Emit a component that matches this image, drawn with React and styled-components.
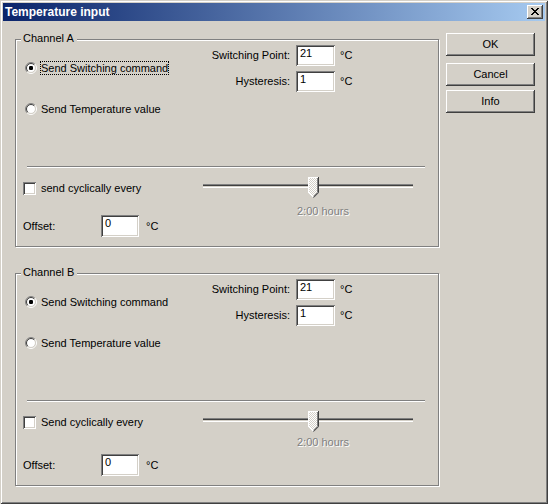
import React from 'react';
import styled, { createGlobalStyle } from 'styled-components';

const GlobalStyle = createGlobalStyle`
  html, body { margin: 0; padding: 0; background: #D4D0C8; }
  body {
    font-family: "Liberation Sans", Arial, sans-serif;
    font-size: 11px;
    color: #000;
  }
`;

const Window = styled.div`
  width: 548px;
  height: 504px;
  box-sizing: border-box;
  padding: 3px;
  background: #D4D0C8;
  box-shadow: inset 1px 1px 0 #D4D0C8, inset -1px -1px 0 #404040,
    inset 2px 2px 0 #fff, inset -2px -2px 0 #808080;
  display: flex;
  flex-direction: column;
`;

const Caption = styled.div`
  height: 18px;
  flex: none;
  display: flex;
  align-items: center;
  justify-content: space-between;
  padding: 0 2px 0 2px;
  background: linear-gradient(to right, #0A246A, #A6CAF0);
`;

const CaptionTitle = styled.span`
  color: #fff;
  font-weight: bold;
  font-size: 12px;
  line-height: 14px;
`;

const CloseButton = styled.div`
  width: 16px;
  height: 14px;
  box-sizing: border-box;
  padding: 3px 0 0 4px;
  background: #D4D0C8;
  box-shadow: inset -1px -1px 0 #404040, inset 1px 1px 0 #fff,
    inset -2px -2px 0 #808080, inset 2px 2px 0 #D4D0C8;
  display: flex;
  align-items: flex-start;
`;

const Body = styled.div`
  display: flex;
  flex: 1;
`;

const GroupsColumn = styled.div`
  display: flex;
  flex-direction: column;
  gap: 26px;
  padding: 18px 0 0 12px;
`;

const ButtonsColumn = styled.div`
  display: flex;
  flex-direction: column;
  padding-top: 12px;
  margin-left: 7px;
`;

const PushButton = styled.div`
  width: 89px;
  height: 23px;
  box-sizing: border-box;
  margin-top: ${(p) => p.$gap || 0}px;
  display: flex;
  align-items: center;
  justify-content: center;
  background: #D4D0C8;
  box-shadow: inset -1px -1px 0 #404040, inset 1px 1px 0 #fff,
    inset -2px -2px 0 #808080, inset 2px 2px 0 #D4D0C8;
  line-height: 13px;
`;

const Group = styled.div`
  position: relative;
  box-sizing: border-box;
  width: 424px;
  height: ${(p) => p.$height}px;
  border: 1px solid #808080;
  box-shadow: 1px 1px 0 #fff, inset 1px 1px 0 #fff;
`;

const Legend = styled.span`
  position: absolute;
  left: 5px;
  top: -8px;
  padding: 0 3px 0 2px;
  line-height: 13px;
  background: #D4D0C8;
`;

const TopSection = styled.div`
  display: grid;
  grid-template-columns: 184px auto;
  align-items: start;
`;

const RadioList = styled.div`
  display: flex;
  flex-direction: column;
  gap: 27px;
  padding-top: 21px;
`;

const RadioRow = styled.div`
  display: flex;
  align-items: center;
  height: 14px;
  padding-left: 9px;
`;

const RadioText = styled.span`
  margin-left: 3px;
  line-height: 12px;
  border: 1px dotted ${(p) => (p.$focused ? '#000' : 'transparent')};
  white-space: nowrap;
`;

const RadioSvg = styled.svg`
  flex: none;
  display: block;
`;

const FieldGrid = styled.div`
  display: grid;
  grid-template-columns: 90px auto auto;
  justify-content: start;
  align-items: center;
  row-gap: 5px;
  padding-top: 5px;
`;

const FieldLabel = styled.span`
  text-align: right;
  line-height: 13px;
  white-space: nowrap;
`;

const EditBox = styled.div`
  box-sizing: border-box;
  width: ${(p) => p.$w}px;
  height: ${(p) => p.$h}px;
  margin-left: ${(p) => p.$ml || 0}px;
  padding: 2px 2px 0 4px;
  line-height: 13px;
  background: #fff;
  box-shadow: inset 1px 1px 0 #808080, inset -1px -1px 0 #fff,
    inset 2px 2px 0 #404040, inset -2px -2px 0 #D4D0C8;
`;

const Unit = styled.span`
  margin-left: ${(p) => p.$ml}px;
  line-height: 13px;
`;

const Separator = styled.div`
  margin: 50px 0 0 11px;
  width: 398px;
  height: 0;
  border-top: 1px solid #808080;
  border-bottom: 1px solid #fff;
`;

const BottomSection = styled.div`
  display: grid;
  grid-template-columns: 187px 210px;
  margin-top: 9px;
`;

const LeftControls = styled.div`
  display: flex;
  flex-direction: column;
  padding-left: 7px;
`;

const CheckRow = styled.div`
  display: flex;
  align-items: center;
  gap: 5px;
  height: 13px;
  margin-top: 5px;
  line-height: 13px;
  white-space: nowrap;
`;

const CheckBox = styled.span`
  flex: none;
  width: 13px;
  height: 13px;
  background: #fff;
  box-shadow: inset 1px 1px 0 #808080, inset -1px -1px 0 #fff,
    inset 2px 2px 0 #404040, inset -2px -2px 0 #D4D0C8;
`;

const OffsetRow = styled.div`
  display: flex;
  align-items: center;
  margin-top: ${(p) => p.$gap}px;
`;

const OffsetLabel = styled.span`
  width: 78px;
  line-height: 13px;
`;

const SliderBox = styled.div`
  display: flex;
  flex-direction: column;
`;

const SliderTrackArea = styled.div`
  position: relative;
  height: 21px;
`;

const Track = styled.div`
  margin-top: 7px;
  height: 4px;
  box-sizing: border-box;
  border-top: 1px solid #808080;
  border-bottom: 1px solid #fff;
  background: linear-gradient(#404040 0 1px, #D4D0C8 1px 2px);
`;

const Thumb = styled.svg`
  position: absolute;
  left: 105px;
  top: 0;
  display: block;
`;

const SliderCaption = styled.div`
  margin-top: ${(p) => p.$gap}px;
  padding-left: 94px;
  line-height: 13px;
  color: #808080;
  text-shadow: 1px 1px 0 #fff;
`;

const RadioIcon = ({ checked }) => (
  <RadioSvg width="12" height="12" viewBox="0 0 12 12">
    <circle cx="6" cy="6" r="4.2" fill="#fff" />
    <path d="M2.111 9.889A5.5 5.5 0 0 1 9.889 2.111" fill="none" stroke="#808080" />
    <path d="M9.889 2.111A5.5 5.5 0 0 1 2.111 9.889" fill="none" stroke="#fff" />
    <path d="M2.818 9.182A4.5 4.5 0 0 1 9.182 2.818" fill="none" stroke="#404040" />
    <path d="M9.182 2.818A4.5 4.5 0 0 1 2.818 9.182" fill="none" stroke="#D4D0C8" />
    {checked && <rect x="4" y="4" width="4" height="4" rx="1.2" fill="#000" />}
  </RadioSvg>
);

const CloseGlyph = () => (
  <svg width="8" height="7" viewBox="0 0 8 7" shapeRendering="crispEdges">
    <g fill="#000">
      <rect x="0" y="0" width="2" height="1" />
      <rect x="6" y="0" width="2" height="1" />
      <rect x="1" y="1" width="2" height="1" />
      <rect x="5" y="1" width="2" height="1" />
      <rect x="2" y="2" width="4" height="1" />
      <rect x="3" y="3" width="2" height="1" />
      <rect x="2" y="4" width="4" height="1" />
      <rect x="1" y="5" width="2" height="1" />
      <rect x="5" y="5" width="2" height="1" />
      <rect x="0" y="6" width="2" height="1" />
      <rect x="6" y="6" width="2" height="1" />
    </g>
  </svg>
);

const ThumbIcon = ({ id }) => (
  <Thumb width="11" height="21" viewBox="0 0 11 21">
    <defs>
      <pattern id={id} width="2" height="2" patternUnits="userSpaceOnUse">
        <rect width="2" height="2" fill="#D4D0C8" />
        <rect width="1" height="1" fill="#fff" />
        <rect x="1" y="1" width="1" height="1" fill="#fff" />
      </pattern>
    </defs>
    <path d="M0 0H11V15.5L5.5 21 0 15.5Z" fill={`url(#${id})`} />
    <path d="M0.5 15.5V0.5H10" fill="none" stroke="#fff" shapeRendering="crispEdges" />
    <path d="M0.5 15.5L5.5 20.5" fill="none" stroke="#fff" />
    <path d="M9.5 1V15.5L5.5 19.5" fill="none" stroke="#808080" />
    <path d="M10.5 0V15.7L5.5 20.7" fill="none" stroke="#404040" />
  </Thumb>
);

const channels = [
  { name: 'Channel A', height: 208, cyclic: 'send cyclically every', focused: true, offsetGap: 20, captionGap: 7 },
  { name: 'Channel B', height: 213, cyclic: 'Send cyclically every', focused: false, offsetGap: 25, captionGap: 4 },
];

const ChannelGroup = ({ ch, idx }) => (
  <Group $height={ch.height}>
    <Legend>{ch.name}</Legend>
    <TopSection>
      <RadioList>
        <RadioRow>
          <RadioIcon checked />
          <RadioText $focused={ch.focused}>Send Switching command</RadioText>
        </RadioRow>
        <RadioRow>
          <RadioIcon />
          <RadioText>Send Temperature value</RadioText>
        </RadioRow>
      </RadioList>
      <FieldGrid>
        <FieldLabel>Switching Point:</FieldLabel>
        <EditBox $w={39} $h={21} $ml={6}>21</EditBox>
        <Unit $ml={5}>°C</Unit>
        <FieldLabel>Hysteresis:</FieldLabel>
        <EditBox $w={39} $h={21} $ml={6}>1</EditBox>
        <Unit $ml={5}>°C</Unit>
      </FieldGrid>
    </TopSection>
    <Separator />
    <BottomSection>
      <LeftControls>
        <CheckRow>
          <CheckBox />
          <span>{ch.cyclic}</span>
        </CheckRow>
        <OffsetRow $gap={ch.offsetGap}>
          <OffsetLabel>Offset:</OffsetLabel>
          <EditBox $w={38} $h={22}>0</EditBox>
          <Unit $ml={7}>°C</Unit>
        </OffsetRow>
      </LeftControls>
      <SliderBox>
        <SliderTrackArea>
          <Track />
          <ThumbIcon id={`dither${idx}`} />
        </SliderTrackArea>
        <SliderCaption $gap={ch.captionGap}>2:00 hours</SliderCaption>
      </SliderBox>
    </BottomSection>
  </Group>
);

export default function App() {
  return (
    <>
      <GlobalStyle />
      <Window>
        <Caption>
          <CaptionTitle>Temperature input</CaptionTitle>
          <CloseButton>
            <CloseGlyph />
          </CloseButton>
        </Caption>
        <Body>
          <GroupsColumn>
            {channels.map((ch, i) => (
              <ChannelGroup key={ch.name} ch={ch} idx={i} />
            ))}
          </GroupsColumn>
          <ButtonsColumn>
            <PushButton>OK</PushButton>
            <PushButton $gap={7}>Cancel</PushButton>
            <PushButton $gap={4}>Info</PushButton>
          </ButtonsColumn>
        </Body>
      </Window>
    </>
  );
}
